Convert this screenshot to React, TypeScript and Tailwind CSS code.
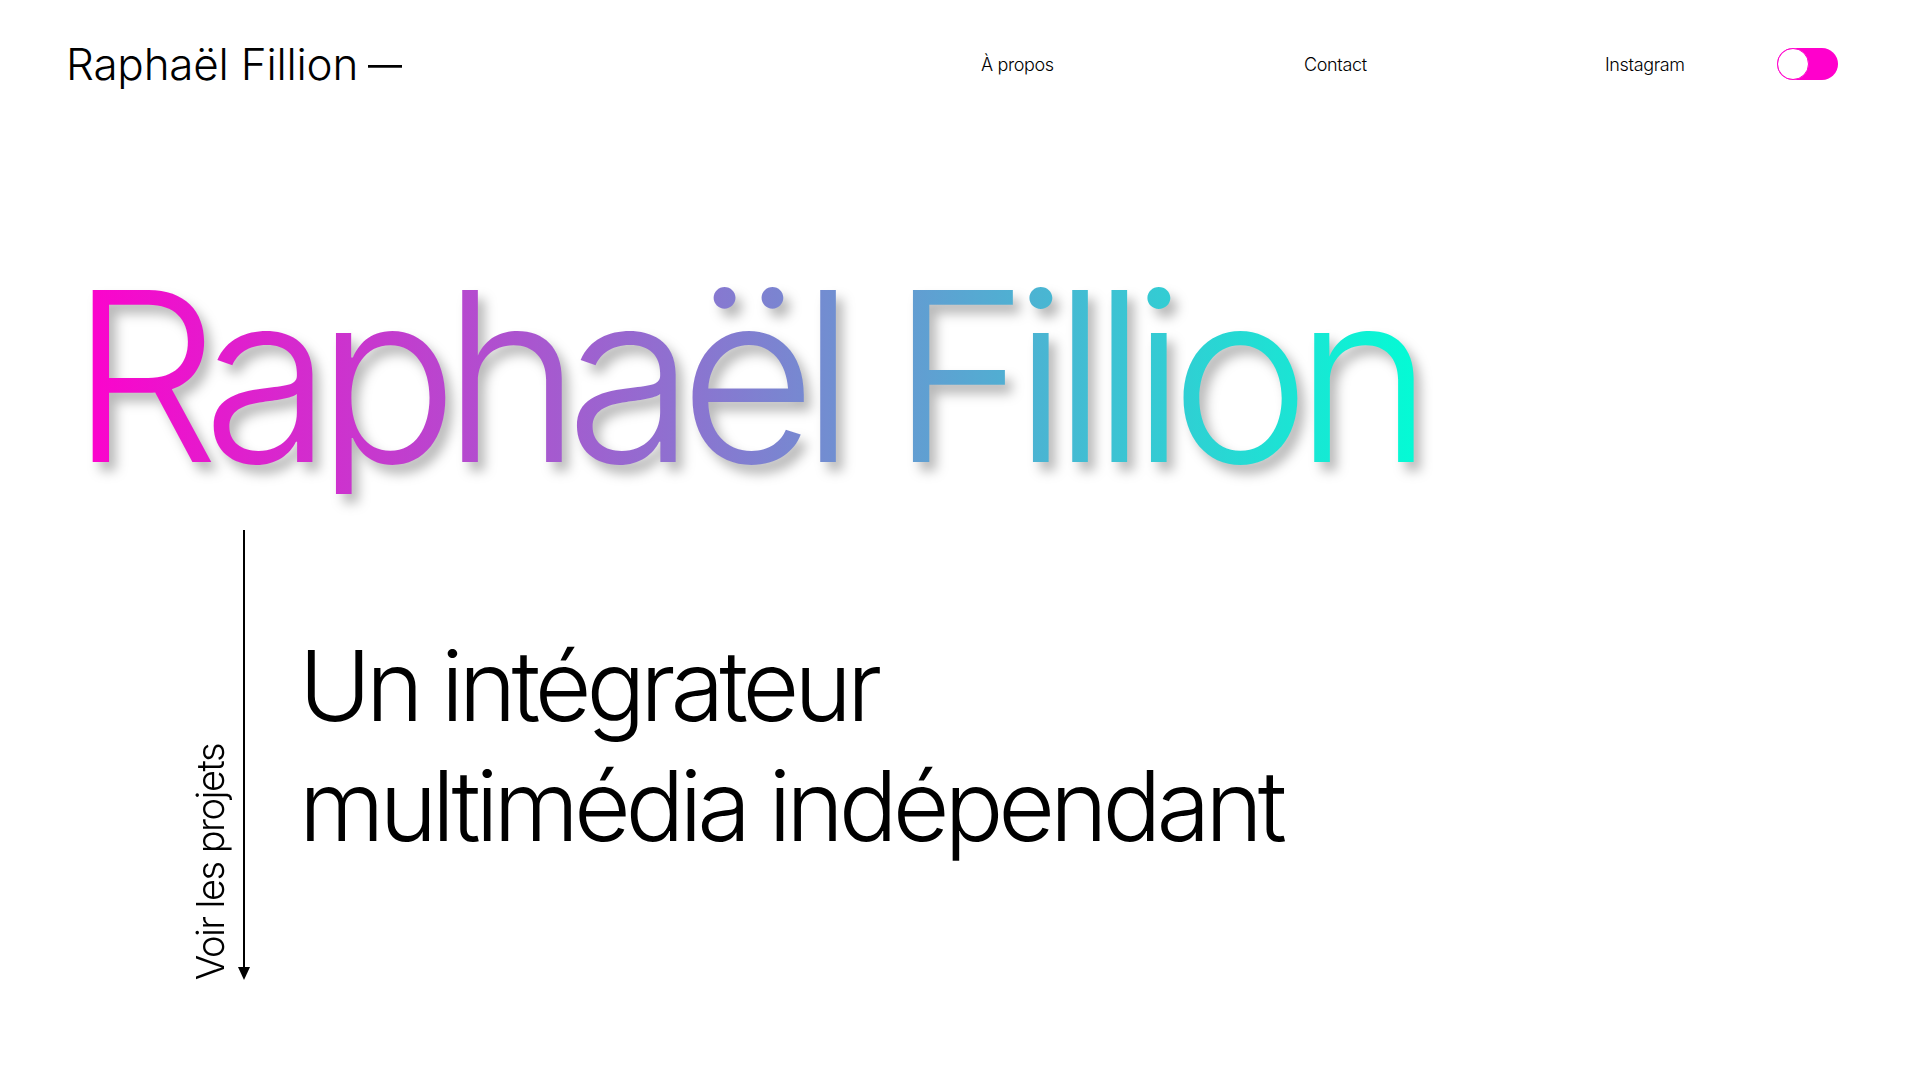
import React from "react";

const font = "font-['Inter','Noto_Sans',sans-serif]";

const Toggle = () => {
  return (
    <div className="w-[61px] h-[32px] rounded-full bg-[#ff00cc] flex items-center">
      <div className="w-[32px] h-[32px] rounded-full bg-white border border-[#ff00cc]" />
    </div>
  );
};

const ScrollArrow = () => {
  return (
    <svg width="14" height="450" viewBox="0 0 14 450" className="block">
      <line x1="7" y1="0" x2="7" y2="440" stroke="#000" strokeWidth="2" />
      <polygon points="1,437 13,437 7,450" fill="#000" />
    </svg>
  );
};

const App = () => {
  return (
    <div className={`${font} w-[1920px] h-[1080px] bg-white text-black overflow-hidden`}>
      <header className="h-[128px] flex items-center justify-between pl-[66px] pr-[82px]">
        <div className="text-[44px] font-light tracking-[-0.005em] flex items-center gap-[10px]">
          Raphaël Fillion
          <span className="inline-block w-[34px] overflow-hidden">
            <span className="inline-block scale-x-[0.78] origin-left">—</span>
          </span>
        </div>
        <nav className="flex items-center text-[18px] font-light tracking-[-0.02em]">
          <a className="w-[323px]">À propos</a>
          <a className="w-[301px]">Contact</a>
          <a className="w-[172px]">Instagram</a>
          <Toggle />
        </nav>
      </header>

      <main>
        <h1 className="mt-[130px] pl-[70px] text-[236px] leading-none font-light tracking-[-0.067em]">
          <span className="inline-block bg-[linear-gradient(to_right,#ff00cc,#00ffd5)] bg-clip-text text-transparent drop-shadow-[7px_9px_6px_rgba(0,0,0,0.28)] pr-[20px]">
            Raphaël Fillion
          </span>
        </h1>

        <div className="mt-[36px] flex h-[450px]">
          <div className="pl-[191px] flex items-end gap-[8px]">
            <span className="[writing-mode:vertical-rl] rotate-180 text-[38px] leading-none font-light tracking-[-0.04em]">
              Voir les projets
            </span>
            <ScrollArrow />
          </div>
          <p className="ml-[48px] pt-[96px] text-[98px] leading-[120px] font-light tracking-[-0.052em]">
            Un intégrateur
            <br />
            multimédia indépendant
          </p>
        </div>
      </main>
    </div>
  );
};

export default App;
